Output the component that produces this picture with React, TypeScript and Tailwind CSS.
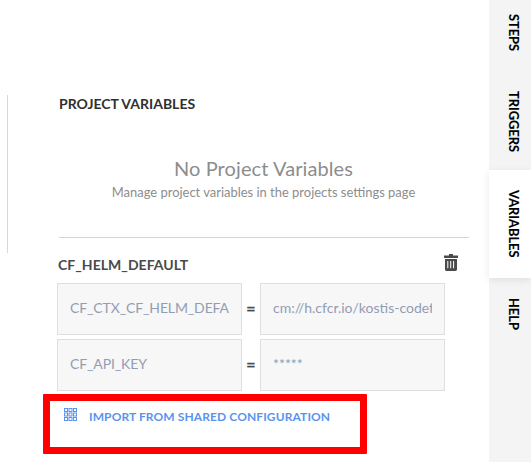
type RowProps = { name: string; value: string };

function Field({ text, tight = false }: { text: string; tight?: boolean }) {
  return (
    <div className="flex h-[52px] w-[185px] items-center border border-[#dddfe0] bg-[#f7f7f7] px-3 pb-0.5 text-sm text-[#929db3]">
      <div className={`w-full overflow-hidden whitespace-nowrap ${tight ? "tracking-[-0.12px]" : ""}`}>{text}</div>
    </div>
  );
}

function VariableRow({ name, value }: RowProps) {
  return (
    <div className="flex items-center">
      <Field text={name} tight />
      <span className="w-[18px] pb-[3px] text-center text-base leading-4 font-bold text-[#4a4a4a] [-webkit-text-stroke:0.3px_#4a4a4a]">=</span>
      <Field text={value} />
    </div>
  );
}

function TrashIcon() {
  return (
    <svg width="14" height="17" viewBox="0 0 14 17" fill="#4a4a4a">
      <path d="M5 0h4v1.5h5V4H0V1.5h5z" />
      <path
        fillRule="evenodd"
        d="M1 5h12v10.5a1.4 1.4 0 0 1-1.4 1.4H2.4A1.4 1.4 0 0 1 1 15.5zM3.3 7v7.3h1V7zM6.2 7v7.3h1V7zM9.1 7v7.3h1V7z"
      />
    </svg>
  );
}

function GridIcon() {
  const steps = [0.5, 5, 9.5];
  return (
    <svg width="13" height="13" viewBox="0 0 13 13" fill="none" stroke="#5a93ee">
      {steps.map((y) =>
        steps.map((x) => <rect key={`${x}-${y}`} x={x} y={y} width="3" height="3" />)
      )}
    </svg>
  );
}

const tabs = [
  { label: "STEPS", style: "h-[77px] pt-[14px]" },
  { label: "TRIGGERS", style: "h-[93px] pt-[14px]" },
  { label: "VARIABLES", style: "h-[108px] pt-5 bg-white shadow-[0_2px_8px_rgba(0,0,0,0.09)]" },
  { label: "HELP", style: "h-[184px] pt-5" },
];

export default function App() {
  return (
    <div className="flex h-[462px] w-[531px] overflow-hidden bg-white font-['Lato',sans-serif]">
      <div className="mt-[95px] ml-[7px] h-[158px] w-px shrink-0 bg-[#d8d8d8]" />
      <main className="flex w-[481px] shrink-0 flex-col pt-[94px]">
        <h2 className="ml-[51px] text-sm leading-5 font-bold text-[#303030]">PROJECT VARIABLES</h2>
        <section className="mt-[41px] ml-[51px] h-[83px] w-[410px] border-b border-[#d5d5d5] text-center text-[#8d8d8d]">
          <p className="pr-px text-xl leading-[26px] tracking-[0.1px]">No Project Variables</p>
          <p className="pt-px pr-px text-[12.95px] leading-5">Manage project variables in the projects settings page</p>
        </section>
        <section className="mt-4 ml-[49px] w-[401px]">
          <header className="flex h-[21px] items-start justify-between pl-px">
            <h3 className="pt-px text-sm leading-5 font-bold tracking-[0.04px] text-[#4a4a4a]">CF_HELM_DEFAULT</h3>
            <TrashIcon />
          </header>
          <div className="mt-2 flex flex-col gap-1">
            <VariableRow name="CF_CTX_CF_HELM_DEFAULT" value="cm://h.cfcr.io/kostis-codefresh" />
            <VariableRow name="CF_API_KEY" value="*****" />
          </div>
        </section>
        <div className="mt-[3px] ml-[35px] flex h-[60px] w-[324px] items-start rounded-[1px] border-[7px] border-[#ff0000] pl-3.5">
          <div className="mt-[7px]"><GridIcon /></div>
          <span className="mt-2 ml-3 text-xs leading-4 font-bold tracking-[0.1px] whitespace-nowrap text-[#5a93ee]">
            IMPORT FROM SHARED CONFIGURATION
          </span>
        </div>
      </main>
      <nav className="flex w-[42px] shrink-0 flex-col bg-[#f4f4f4] text-sm leading-5 font-bold text-black">
        {tabs.map((t) => (
          <div key={t.label} className={`flex items-start justify-center pl-2 ${t.style}`}>
            <span className="origin-top scale-y-[0.915] [-webkit-text-stroke:0.1px_black] [writing-mode:vertical-rl]">{t.label}</span>
          </div>
        ))}
      </nav>
    </div>
  );
}
